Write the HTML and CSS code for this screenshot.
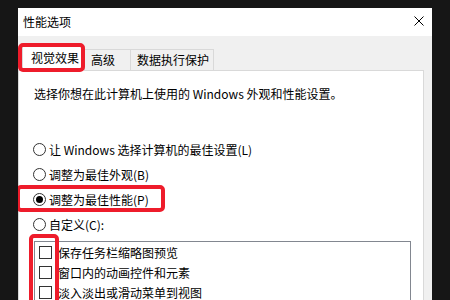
FILE: index.html
```html
<!DOCTYPE html>
<html lang="zh-CN">

<head>
    <meta charset="UTF-8">
    <title>性能选项</title>
    <link rel="stylesheet" href="styles.css">
</head>

<body>
    <div class="window">
        <!-- Title bar -->
        <div class="titlebar">
            <span class="title">性能选项</span>
            <svg class="close" width="10" height="10" viewBox="0 0 10 10">
                <path d="M0.5 0.5 L9.5 9.5 M9.5 0.5 L0.5 9.5" stroke="#000" stroke-width="1" />
            </svg>
        </div>

        <!-- Tabs -->
        <div class="tabs">
            <div class="tab active mark">视觉效果</div>
            <div class="tab tab-adv">高级</div>
            <div class="tab tab-dep">数据执行保护</div>
        </div>

        <div class="panel">
            <p class="intro">选择你想在此计算机上使用的 Windows 外观和性能设置。</p>

            <div class="options">
                <label class="option"><span class="radio"></span>让 Windows 选择计算机的最佳设置(L)</label>
                <label class="option"><span class="radio"></span>调整为最佳外观(B)</label>
                <label class="option mark mark-radio"><span class="radio checked"></span>调整为最佳性能(P)</label>
                <label class="option"><span class="radio"></span>自定义(C):</label>
            </div>

            <div class="list mark mark-list">
                <div class="item"><span class="checkbox"></span>保存任务栏缩略图预览</div>
                <div class="item"><span class="checkbox"></span>窗口内的动画控件和元素</div>
                <div class="item"><span class="checkbox"></span>淡入淡出或滑动菜单到视图</div>
            </div>
        </div>
    </div>
</body>

</html>
```

FILE: styles.css
```css
/* Performance options dialog */

body {
    margin: 0;
    height: 300px;
    overflow: hidden;
    background-color: #161616;
    font-family: "Noto Sans CJK SC", sans-serif;
    font-size: 12px;
    color: #000;
}

.window {
    margin: 8px 0 0 18px;
    width: 414px;
    height: 292px;
    overflow: hidden;
    background-color: #f0f0f0;
}

.titlebar {
    height: 28px;
    background-color: #fff;
    display: flex;
    align-items: center;
    justify-content: space-between;
    padding: 0 8px 0 5px;
    line-height: 16px;
}

.close {
    margin-top: -2px;
}

/* Tabs */

.tabs {
    display: flex;
    align-items: flex-end;
    height: 34px;
    padding-left: 4px;
    position: relative;
    z-index: 1;
}

.tab {
    box-sizing: border-box;
    height: 21px;
    line-height: 19px;
    padding-left: 6px;
    border: 1px solid #d9d9d9;
    border-bottom: none;
    margin-left: -1px;
}

.tab-adv {
    width: 47px;
}

.tab-dep {
    width: 84px;
}

.tab.active {
    width: 63px;
    height: 25px;
    margin: 0 0 -1px 0;
    padding-left: 8px;
    line-height: 22px;
    background-color: #fff;
}

.panel {
    margin-right: 8px;
    height: 240px;
    background-color: #fff;
    border: 1px solid #d9d9d9;
    padding: 15px 0 0 15px;
}

.intro {
    margin: 0;
    line-height: 16px;
}

.options {
    margin-top: 35px;
    display: flex;
    flex-direction: column;
    align-items: flex-start;
}

.option {
    display: flex;
    align-items: center;
    height: 25px;
    gap: 3px;
    margin-left: -1px;
}

.radio {
    box-sizing: border-box;
    width: 13px;
    height: 13px;
    border: 1px solid #333;
    border-radius: 50%;
    background-color: #fff;
    position: relative;
}

.radio.checked::after {
    content: '';
    position: absolute;
    left: 2px;
    top: 2px;
    width: 7px;
    height: 7px;
    border-radius: 50%;
    background-color: #000;
}

/* Custom settings list */

.list {
    margin-top: 4px;
    width: 371px;
    height: 80px;
    border: 1px solid #828790;
    padding-left: 4px;
}

.item {
    display: flex;
    align-items: center;
    height: 20px;
    gap: 6px;
}

.checkbox {
    box-sizing: border-box;
    width: 13px;
    height: 13px;
    border: 1px solid #333;
    background-color: #fff;
}

/* Red annotation boxes */

.mark {
    position: relative;
}

.mark::after {
    content: '';
    position: absolute;
    border: 4px solid #ee1c2b;
    border-radius: 5px;
    pointer-events: none;
}

.tab.mark::after {
    top: -4px;
    left: -5px;
    right: -1px;
    bottom: -1px;
}

.mark-radio::after {
    top: -2px;
    left: -17px;
    width: 141px;
    height: 19px;
}

.mark-list::after {
    top: -8px;
    left: -6px;
    width: 22px;
    bottom: -20px;
}
```
